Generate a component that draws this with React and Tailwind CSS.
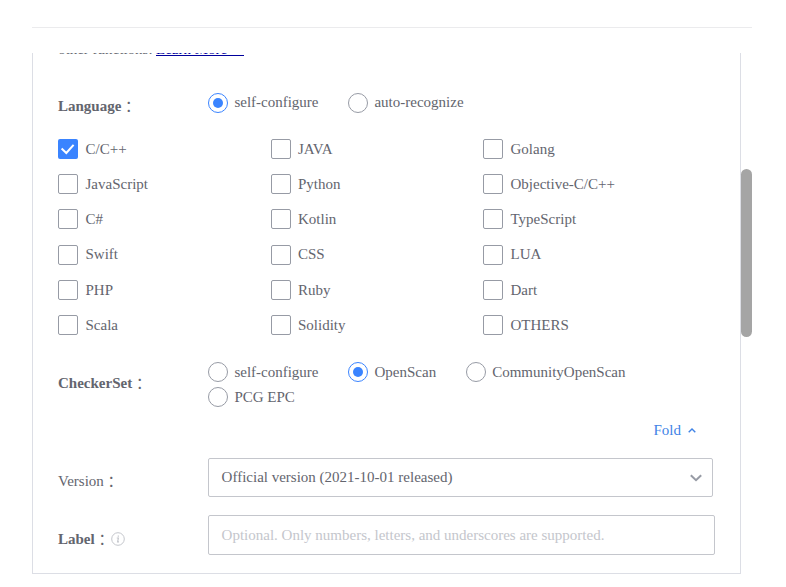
import React from "react";

const languages = [
  { height: "h-[35px]", items: ["C/C++", "JAVA", "Golang"] },
  { height: "h-[35px]", items: ["JavaScript", "Python", "Objective-C/C++"] },
  { height: "h-9", items: ["C#", "Kotlin", "TypeScript"] },
  { height: "h-[35px]", items: ["Swift", "CSS", "LUA"], raised: true },
  { height: "h-[35px]", items: ["PHP", "Ruby", "Dart"] },
  { height: "h-5", items: ["Scala", "Solidity", "OTHERS"] },
];

function Radio({ label, checked, raised }) {
  return (
    <label className="flex h-5 items-center gap-[6.4px]">
      <span
        className={`flex size-5 shrink-0 items-center justify-center rounded-full border ${
          checked ? "border-[#3a84ff]" : "border-[#979ba5]"
        }`}
      >
        {checked && <span className="size-2.5 rounded-full bg-[#3a84ff]" />}
      </span>
      <span className={`whitespace-nowrap ${raised ? "pb-0.5" : ""}`}>{label}</span>
    </label>
  );
}

function Checkbox({ label, checked, raised }) {
  return (
    <label className="flex h-5 items-center gap-[7.5px]">
      {checked ? (
        <span className="flex size-5 shrink-0 items-center justify-center rounded-[2px] bg-[#3a84ff]">
          <svg viewBox="0 0 20 20" className="size-5" fill="none" stroke="white" strokeWidth="2">
            <path d="M3.6 9.6 8.3 14 15.6 5.8" />
          </svg>
        </span>
      ) : (
        <span className="size-5 shrink-0 rounded-[2px] border border-[#979ba5]" />
      )}
      <span className={`whitespace-nowrap ${raised ? "pb-0.5" : ""}`}>{label}</span>
    </label>
  );
}

function Colon() {
  return (
    <span className="align-[-1px] font-['Noto_Sans_CJK_JP',sans-serif] leading-none font-normal">：</span>
  );
}

export default function App() {
  return (
    <div className="h-[587px] w-[786px] overflow-hidden bg-white pt-[27px] pl-8 font-['Liberation_Serif',serif] text-[15px] leading-5 text-[#63656e]">
      <div className="h-px w-[720px] bg-[#ebebed]" />
      <div className="mt-[25px] flex w-[720px]">
        <div className="h-[521px] w-[709px] overflow-hidden border-x border-b border-[#dcdee5] pl-[25px]">
          <div className="-mt-[14px] flex h-5">
            <span className="w-[98px] whitespace-nowrap">other functions:</span>
            <a className="w-[88px] overflow-x-clip whitespace-pre text-[#00009c] underline decoration-1 underline-offset-1">
              {"Learn More     "}
            </a>
          </div>

          <div className="mt-[34px] flex">
            <div className="h-[23px] w-[150px] pt-[3px] font-bold">
              Language
              <Colon />
            </div>
            <div className="flex gap-[29.5px]">
              <Radio label="self-configure" checked raised />
              <Radio label="auto-recognize" raised />
            </div>
          </div>

          <div className="mt-[23px]">
            {languages.map((row) => (
              <div key={row.items[0]} className={`grid grid-cols-[212.5px_212.5px_212px] ${row.height}`}>
                {row.items.map((name) => (
                  <Checkbox key={name} label={name} checked={name === "C/C++"} raised={row.raised} />
                ))}
              </div>
            ))}
          </div>

          <div className="mt-[27px] flex">
            <div className="h-[31px] w-[150px] pt-[11px] font-bold">
              CheckerSet
              <Colon />
            </div>
            <div className="flex flex-col gap-[5px]">
              <div className="flex gap-[29.6px]">
                <Radio label="self-configure" />
                <Radio label="OpenScan" checked />
                <Radio label="CommunityOpenScan" />
              </div>
              <Radio label="PCG EPC" />
            </div>
          </div>

          <div className="mt-[13px] flex h-5 items-center justify-end gap-[7px] pr-11 text-[#3f83e6]">
            <span>Fold</span>
            <svg viewBox="0 0 8 5" className="h-[5px] w-2" fill="none" stroke="currentColor" strokeWidth="1.4">
              <path d="M0.7 4.3 4 1 7.3 4.3" />
            </svg>
          </div>

          <div className="mt-[18px] flex">
            <div className="h-[33px] w-[150px] pt-[13px]">
              Version
              <Colon />
            </div>
            <div className="flex h-[39px] w-[505px] items-center justify-between rounded-[2px] border border-[#c4c6cc] pr-[10px] pl-[12.6px]">
              <span className="pb-0.5">Official version (2021-10-01 released)</span>
              <svg viewBox="0 0 12 8" className="h-2 w-3" fill="none" stroke="#979ba5" strokeWidth="2">
                <path d="M0.8 1.2 6 6.2 11.2 1.2" />
              </svg>
            </div>
          </div>

          <div className="mt-[18px] flex">
            <div className="flex h-10 w-[150px] items-center pt-2 font-bold">
              <span className="h-5 whitespace-nowrap">
                Label
                <Colon />
              </span>
              <svg viewBox="0 0 14 14" className="ml-[0.8px] size-3.5" fill="none" stroke="#c4c6cc">
                <circle cx="7" cy="7" r="6.3" />
                <path d="M5.8 6h1.6L6.6 9.9H8M7.3 3.4v1.4" strokeWidth="1.2" />
              </svg>
            </div>
            <div className="flex h-10 w-[507px] items-center rounded-[2px] border border-[#c4c6cc] pl-[12.6px] text-[#c4c6cc]">
              Optional. Only numbers, letters, and underscores are supported.
            </div>
          </div>
        </div>
        <div className="mt-[116px] h-[168px] w-[11px] rounded-full bg-[#a5a5a5]" />
      </div>
    </div>
  );
}
